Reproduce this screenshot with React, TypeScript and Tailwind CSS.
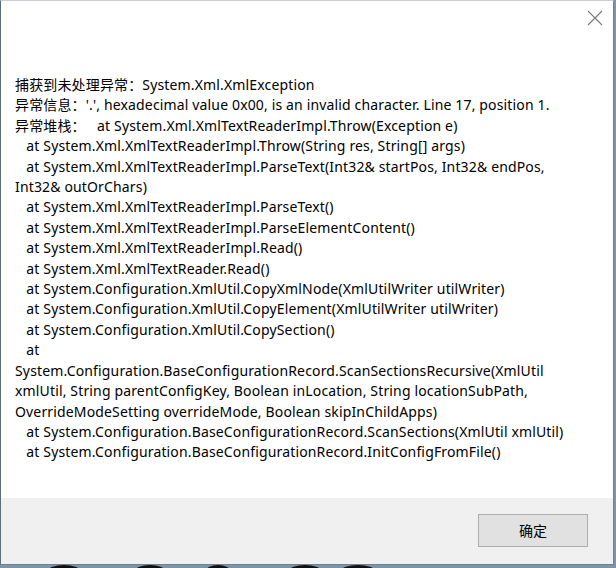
import React from "react";

const lines: string[] = [
    "捕获到未处理异常：System.Xml.XmlException",
    "异常信息：'.', hexadecimal value 0x00, is an invalid character. Line 17, position 1.",
    "异常堆栈：   at System.Xml.XmlTextReaderImpl.Throw(Exception e)",
    "   at System.Xml.XmlTextReaderImpl.Throw(String res, String[] args)",
    "   at System.Xml.XmlTextReaderImpl.ParseText(Int32& startPos, Int32& endPos,",
    "Int32& outOrChars)",
    "   at System.Xml.XmlTextReaderImpl.ParseText()",
    "   at System.Xml.XmlTextReaderImpl.ParseElementContent()",
    "   at System.Xml.XmlTextReaderImpl.Read()",
    "   at System.Xml.XmlTextReader.Read()",
    "   at System.Configuration.XmlUtil.CopyXmlNode(XmlUtilWriter utilWriter)",
    "   at System.Configuration.XmlUtil.CopyElement(XmlUtilWriter utilWriter)",
    "   at System.Configuration.XmlUtil.CopySection()",
    "   at",
    "System.Configuration.BaseConfigurationRecord.ScanSectionsRecursive(XmlUtil",
    "xmlUtil, String parentConfigKey, Boolean inLocation, String locationSubPath,",
    "OverrideModeSetting overrideMode, Boolean skipInChildApps)",
    "   at System.Configuration.BaseConfigurationRecord.ScanSections(XmlUtil xmlUtil)",
    "   at System.Configuration.BaseConfigurationRecord.InitConfigFromFile()",
];

const App: React.FC = () => {
    return (
        <div className="w-[616px] h-[568px] bg-[#7d95a6] overflow-hidden flex flex-col font-['Noto_Sans','Noto_Sans_CJK_SC',sans-serif]">
            {/* dialog window */}
            <div className="w-[614px] h-[565px] flex flex-col bg-white border-l border-r border-b border-t border-l-[#5d6e7a] border-r-[#6d8394] border-b-[#6d8394] border-t-[#c9cfd4]">
                {/* title bar */}
                <div className="h-[74px] flex justify-end items-start pr-[10px] pt-[9px]">
                    <svg width="16" height="16" viewBox="0 0 16 16">
                        <path d="M1 1 L15 15 M15 1 L1 15" stroke="#7a7a7a" strokeWidth="1.1" fill="none" />
                    </svg>
                </div>

                {/* exception text */}
                <div className="flex-1 pl-[14px] text-[14px] leading-[20.4px] tracking-[0.15px] text-black">
                    {lines.map((line, i) => (
                        <div key={i} className="whitespace-pre">
                            {line}
                        </div>
                    ))}
                </div>

                {/* footer with button */}
                <div className="h-[66px] bg-[#f0f0f0] flex justify-end items-start pt-[16px] pr-[25px]">
                    <button className="w-[110px] h-[33px] bg-[#e1e1e1] border border-[#adadad] text-[14px] text-black">
                        确定
                    </button>
                </div>
            </div>

            {/* wallpaper peeking out below */}
            <svg width="616" height="3" viewBox="0 0 616 3">
                <ellipse cx="64" cy="6" rx="16" ry="6" fill="#111" />
                <ellipse cx="150" cy="6" rx="15" ry="6" fill="#111" />
                <ellipse cx="218" cy="6" rx="12" ry="6" fill="#111" />
                <ellipse cx="305" cy="6" rx="16" ry="6" fill="#111" />
                <ellipse cx="358" cy="6" rx="17" ry="6" fill="#111" />
            </svg>
        </div>
    );
};

export default App;
